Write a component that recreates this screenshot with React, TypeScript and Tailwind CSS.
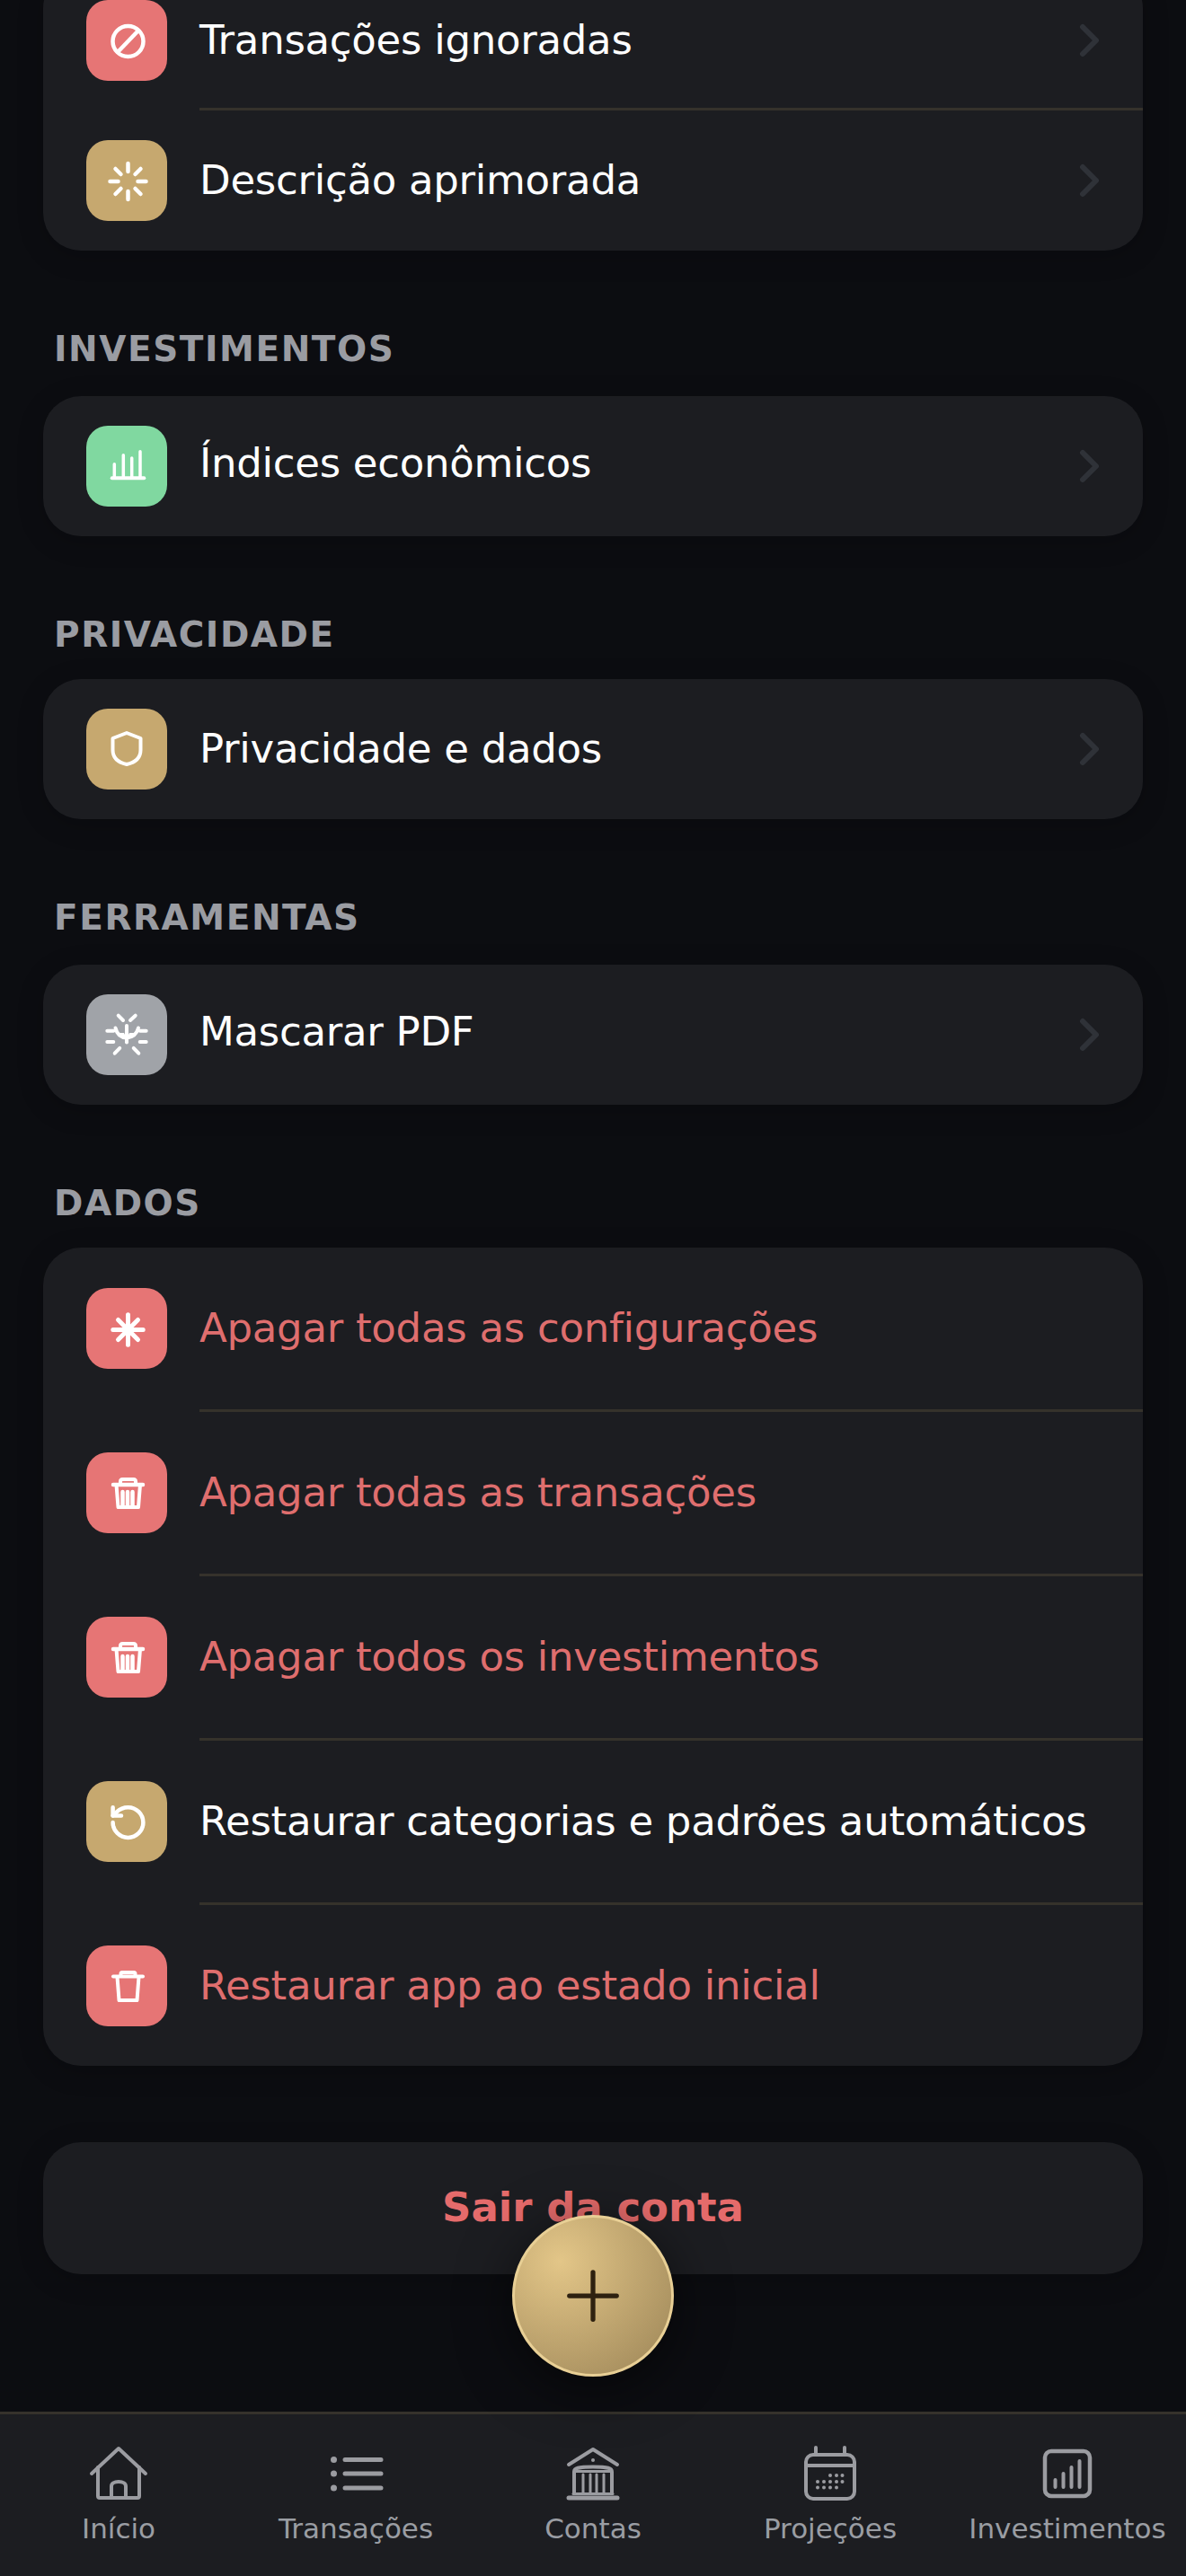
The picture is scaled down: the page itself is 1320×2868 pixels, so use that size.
import React from 'react';
import { Plus } from 'lucide-react';

// every glyph below is drawn in a 60x60 box that sits centred in the 90px tile
const Glyph: React.FC<{ children: React.ReactNode; width?: number }> = ({ children, width = 4.5 }) => (
  <svg
    width={60}
    height={60}
    viewBox="0 0 60 60"
    fill="none"
    stroke="#ffffff"
    strokeWidth={width}
    strokeLinecap="round"
    strokeLinejoin="round"
  >
    {children}
  </svg>
);

const BanIcon = () => (
  <Glyph>
    <circle cx="31.5" cy="31" r="17" />
    <path d="M20 43 43 19" />
  </Glyph>
);

const LoaderIcon = () => (
  <Glyph>
    <path d="M31.5 11v9M31.5 42v9M11.5 31h9M42.5 31h9M17.5 17l6 6M39.5 39l6 6M17.5 45l6-6M39.5 23l6-6" />
  </Glyph>
);

const BarsIcon = () => (
  <Glyph>
    <path d="M13.7 43.3h35.6" strokeWidth={4} />
    <path d="M16.3 42V27.7M26.300 42V17.700M35.700 42V21M45 42V13.700" strokeWidth={3.500} />
  </Glyph>
);

const ShieldIcon = () => (
  <Glyph width={4}>
    <path d="M30 12 14.500 18v13c0 9 6.500 14 15.500 16 9-2 15.500-7 15.500-16V18Z" />
  </Glyph>
);

const MaskIcon = () => (
  <Glyph width={4}>
    <path d="M20.700 8.700 26 14M39.700 8.700 34 14M8.300 25.700h7M44.700 25.700h7M8.300 38h7M44.700 38h7M16.700 50.700l5.600-5.800M43.300 50.700l-5.600-5.800" />
    <path d="M17.500 22.500Q20 33 30 33.500 40 33 43 22.500" />
    <path d="M30 20v18.500" />
    <path d="M22 28h5l1 2h4l1-2h5l1 1q-3 6-9 6t-9-6Z" fill="#ffffff" stroke="none" />
  </Glyph>
);

const AsteriskIcon = () => (
  <Glyph width={5}>
    <path d="M31.500 14.800v33.400M14.800 31.500h33.400M20.500 20.500l22 22M42.500 20.500l-22 22" />
  </Glyph>
);

const TrashIcon: React.FC<{ lines?: boolean }> = ({ lines = true }) => (
  <Glyph width={4}>
    {lines ? (
      <>
        <path d="M15 21h33" strokeWidth={4.500} />
        <path d="M23 21v-3.500c0-1.500 1-2.500 2.500-2.500h12c1.500 0 2.500 1 2.500 2.500V21" />
        <path d="M18.500 21 20.500 46H43l2-25" />
        <path d="M25.500 29v16M31 29v16M36.500 29v16" strokeWidth={4.500} />
      </>
    ) : (
      <>
        <path d="M15 19.500h33" strokeWidth={4} />
        <path d="M23.500 19v-2.500c0-1 .700-1.500 1.500-1.500h13c.800 0 1.500.500 1.500 1.500V19" />
        <path d="M19.500 20 21.500 46H41.500l2-26" />
      </>
    )}
  </Glyph>
);

const RestoreIcon = () => (
  <Glyph width={4.500}>
    <g transform="translate(9 8.500) scale(1.875)" strokeWidth={2.400}>
      <path d="M3 12a9 9 0 1 0 9-9 9.750 9.750 0 0 0-6.740 2.740L3 8" />
      <path d="M3 3v5h5" />
    </g>
  </Glyph>
);

const Chevron = () => (
  <svg width={24} height={40} viewBox="0 0 24 40" fill="none" stroke="#2f3238" strokeWidth={6} strokeLinecap="round" strokeLinejoin="round" className="shrink-0">
    <path d="M5 5l15 15L5 35" />
  </svg>
);

// bottom bar icons, 66x66 box
const NavSvg: React.FC<{ children: React.ReactNode }> = ({ children }) => (
  <svg
    width={66}
    height={66}
    viewBox="0 0 66 66"
    fill="none"
    stroke="#9b9ca1"
    strokeWidth={4}
    strokeLinecap="round"
    strokeLinejoin="round"
  >
    {children}
  </svg>
);

const HomeIcon = () => (
  <NavSvg>
    <path d="M3 33 33 5l30 28" />
    <path d="M10 26v32c0 1 .500 2 2 2h42c1.500 0 2-1 2-2V26" />
    <path d="M25 60V47c0-3 3-5 8-5s8 2 8 5v13" />
  </NavSvg>
);

const ListIcon = () => (
  <NavSvg>
    <path d="M21 17.500h40M21 33h40M21 49h40" strokeWidth={5} />
    <circle cx="8.500" cy="17.500" r="3.500" fill="#9b9ca1" stroke="none" />
    <circle cx="8.500" cy="33" r="3.500" fill="#9b9ca1" stroke="none" />
    <circle cx="8.500" cy="49" r="3.500" fill="#9b9ca1" stroke="none" />
  </NavSvg>
);

const BankIcon = () => (
  <NavSvg>
    <path d="M6 23 33 6l27 17" />
    <circle cx="33" cy="18" r="2" fill="#9b9ca1" stroke="none" />
    <path d="M12 55V31c0-4 4-5.500 21-5.500S54 27 54 31v24" />
    <path d="M13 30.500h40" strokeWidth={3} />
    <path d="M22 34v21M30 34v21M37 34v21M45 34v21" strokeWidth={3} />
    <path d="M6 60h54" strokeWidth={5} />
    <path d="M11 55.500h44" strokeWidth={3} />
  </NavSvg>
);

const CalendarIcon = () => {
  const dots: [number, number][] = [
    [33, 35], [40, 35], [46.500, 35],
    [19, 42], [26, 42], [33, 42], [40, 42], [46.500, 42],
    [19, 48.500], [26, 48.500], [33, 48.500], [40, 48.500],
  ];
  return (
    <NavSvg>
      <rect x="6" y="12" width="54" height="49" rx="8" />
      <path d="M6 24h54M17 4v8M49 4v8" />
      {dots.map(([x, y]) => (
        <circle key={`${x}-${y}`} cx={x} cy={y} r="2" fill="#9b9ca1" stroke="none" />
      ))}
    </NavSvg>
  );
};

const InvestIcon = () => (
  <NavSvg>
    <rect x="8" y="8" width="50" height="50" rx="7" strokeWidth={4.500} />
    <path d="M19.500 48v-8M28.500 48V33M37.500 48V26M46.500 48V19" strokeWidth={4} />
  </NavSvg>
);

const RED = 'bg-[#e67575]';
const GOLD = 'bg-[#c6a86f]';

type Row = {
  label: string;
  tile: string;
  icon: React.ReactNode;
  danger?: boolean;
};

const Tile: React.FC<{ color: string; children: React.ReactNode }> = ({ color, children }) => (
  <div className={`flex h-[90px] w-[90px] shrink-0 items-center justify-center rounded-[24px] ${color}`}>{children}</div>
);

const Divider = () => <div className="ml-[174px] h-[3px] bg-[#35322b]" />;

const Card: React.FC<{ children: React.ReactNode; className?: string }> = ({ children, className = '' }) => (
  <div className={`overflow-hidden rounded-[42px] bg-[#1c1d21] shadow-[0_6px_30px_rgba(0,0,0,0.2)] ${className}`}>
    {children}
  </div>
);

const LinkRow: React.FC<Row & { padding?: string; lift?: string }> = ({
  label,
  tile,
  icon,
  padding = 'pt-[33px] pb-[33px]',
  lift = '',
}) => (
  <div className={`flex items-center pl-[48px] pr-[48px] ${padding}`}>
    <Tile color={tile}>{icon}</Tile>
    <span className={`ml-[36px] flex-1 text-[45px] leading-[54px] tracking-[-0.27px] text-white ${lift}`}>{label}</span>
    <Chevron />
  </div>
);

const Section: React.FC<{ title: string; labelGap: string; children: React.ReactNode }> = ({ title, labelGap, children }) => (
  <section className="mt-[86px]">
    <h2 className={`ml-[12px] text-[39px] font-bold leading-[48px] tracking-[1.56px] text-[#9a9ca2] ${labelGap}`}>{title}</h2>
    {children}
  </section>
);

const dataRows: Row[] = [
  { label: 'Apagar todas as configurações', tile: RED, icon: <AsteriskIcon />, danger: true },
  { label: 'Apagar todas as transações', tile: RED, icon: <TrashIcon />, danger: true },
  { label: 'Apagar todos os investimentos', tile: RED, icon: <TrashIcon />, danger: true },
  { label: 'Restaurar categorias e padrões automáticos', tile: GOLD, icon: <RestoreIcon /> },
  { label: 'Restaurar app ao estado inicial', tile: RED, icon: <TrashIcon lines={false} />, danger: true },
];

const navItems = [
  { label: 'Início', icon: <HomeIcon /> },
  { label: 'Transações', icon: <ListIcon /> },
  { label: 'Contas', icon: <BankIcon /> },
  { label: 'Projeções', icon: <CalendarIcon /> },
  { label: 'Investimentos', icon: <InvestIcon /> },
];

export default function App() {
  return (
    <div className="relative flex h-[2868px] w-[1320px] flex-col overflow-hidden bg-[#0c0d11] font-['DejaVu_Sans',sans-serif]">
      {/* the page is scrolled: the first card starts above the top edge */}
      <main className="min-h-0 flex-1 overflow-hidden px-[48px]">
        <div className="-mt-[33px]">
          <Card>
            <LinkRow label="Transações ignoradas" tile={RED} icon={<BanIcon />} padding="pt-[33px] pb-[30px]" />
            <Divider />
            <LinkRow label="Descrição aprimorada" tile={GOLD} icon={<LoaderIcon />} />
          </Card>

          <Section title="INVESTIMENTOS" labelGap="mb-[28px]">
            <Card>
              <LinkRow label="Índices econômicos" tile="bg-[#80d8a0]" icon={<BarsIcon />} lift="mb-[6px]" />
            </Card>
          </Section>

          <Section title="PRIVACIDADE" labelGap="mb-[25px]">
            <Card>
              <LinkRow label="Privacidade e dados" tile={GOLD} icon={<ShieldIcon />} />
            </Card>
          </Section>

          <Section title="FERRAMENTAS" labelGap="mb-[28px]">
            <Card>
              <LinkRow label="Mascarar PDF" tile="bg-[#a0a3a8]" icon={<MaskIcon />} lift="mb-[6px]" />
            </Card>
          </Section>

          <Section title="DADOS" labelGap="mb-[25px]">
            <Card>
              {dataRows.map((row, i) => {
                const last = i === dataRows.length - 1;
                return (
                  <React.Fragment key={row.label}>
                    <div className={`flex items-center pl-[48px] pt-[45px] ${last ? 'pb-[44px]' : 'pb-[45px]'}`}>
                      <Tile color={row.tile}>{row.icon}</Tile>
                      <span className={`ml-[36px] text-[45px] leading-[54px] tracking-[-0.27px] ${row.danger ? 'text-[#df6e6e]' : 'text-white'}`}>
                        {row.label}
                      </span>
                    </div>
                    {!last && <Divider />}
                  </React.Fragment>
                );
              })}
            </Card>
          </Section>

          <Card className="mt-[85px]">
            <div className="flex h-[147px] items-center justify-center pb-[2px] text-[45px] font-bold text-[#e56b6b]">Sair da conta</div>
          </Card>
        </div>
      </main>

      <button className="absolute left-[570px] top-[2466px] flex h-[180px] w-[180px] items-center justify-center rounded-full border-[3px] border-[#e8cf95] bg-[radial-gradient(circle_at_29%_28%,#e3c688,#a68e5e_85%)] shadow-[0_12px_60px_rgba(0,0,0,0.55)]">
        <Plus size={90} strokeWidth={1.4} color="#2e2110" />
      </button>

      <nav className="grid h-[183px] grid-cols-5 border-t-[3px] border-[#35322b] bg-[#1c1d21] pt-[33px]">
        {navItems.map((item) => (
          <div key={item.label} className="flex flex-col items-center">
            {item.icon}
            <span className="mt-[8px] text-[31px] leading-[40px] text-[#9a9da3]">{item.label}</span>
          </div>
        ))}
      </nav>
    </div>
  );
}
